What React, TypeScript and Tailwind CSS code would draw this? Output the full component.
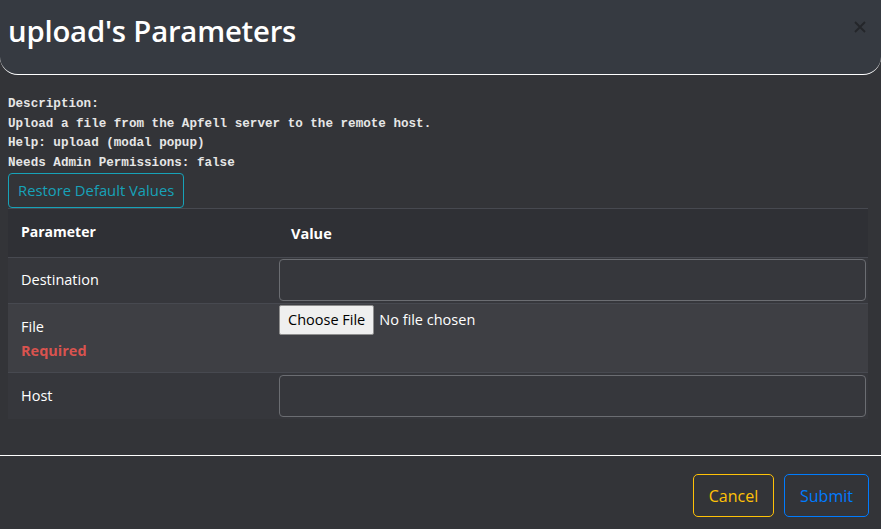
import React from "react";

export default function App() {
  const sans = { fontFamily: '"Open Sans", "Noto Sans", sans-serif' };
  return (
    <div className="w-[881px] h-[529px] bg-[#333438] flex flex-col overflow-hidden" style={sans}>
      <div className="h-[75px] shrink-0 bg-[#363a41] border-b border-white rounded-b-[18px] flex items-start justify-between pl-2 pr-[14px]">
        <h1 className="mt-[11px] text-[29.3px] font-semibold text-white leading-[40px] tracking-[-0.2px]">upload's Parameters</h1>
        <svg width="14" height="14" viewBox="0 0 14 14" className="mt-[20px]">
          <path d="M2 2 L12 12 M12 2 L2 12" stroke="#24262a" strokeWidth="1.8" />
        </svg>
      </div>
      <div className="pl-2 pr-[13px] pt-[20px]">
        <div className="text-[12.6px] font-bold leading-[19.7px] text-[#e6e6e6]" style={{ fontFamily: '"Liberation Mono", monospace' }}>
          <div>Description:</div>
          <div>Upload a file from the Apfell server to the remote host.</div>
          <div>Help: upload (modal popup)</div>
          <div>Needs Admin Permissions: false</div>
        </div>
        <button className="-mt-[1px] h-[35px] px-[9px] border border-[#17a2b8] rounded-[4px] text-[#17a2b8] text-[14.8px] leading-none block">
          Restore Default Values
        </button>
        <div className="bg-[#36373c] border-t border-[#474950]">
          <div className="h-[49px] bg-[#2f3035] flex items-center border-b border-[#474950]">
            <div className="w-[271px] pl-[13px] text-[14px] font-bold text-white -mt-[2px]">Parameter</div>
            <div className="pl-[12px] text-[14.5px] font-bold text-white mt-[3px]">Value</div>
          </div>
          <div className="h-[46px] flex items-center border-b border-[#474950]">
            <div className="w-[271px] pl-[13px] text-[14.5px] text-white">Destination</div>
            <div className="flex-1 pr-[2px]">
              <div className="h-[42px] border border-[#6b6d72] rounded-[4px] bg-[#36373c]" />
            </div>
          </div>
          <div className="h-[69px] flex items-start bg-[#3e3f44] border-b border-[#474950]">
            <div className="w-[271px] pl-[13px] pt-[13px] text-[14.5px] text-white leading-[20px]">
              <div>File</div>
              <div className="mt-[4px] font-bold text-[#d9534f]">Required</div>
            </div>
            <div className="flex items-center pt-[1px]">
              <div className="h-[30px] px-[8px] bg-[#efefef] border border-[#8f8f8f] rounded-[2px] text-[14.5px] text-black flex items-center">Choose File</div>
              <span className="ml-[5px] text-[14.5px] text-white">No file chosen</span>
            </div>
          </div>
          <div className="h-[46px] flex items-center">
            <div className="w-[271px] pl-[13px] text-[14.5px] text-white">Host</div>
            <div className="flex-1 pr-[2px]">
              <div className="h-[42px] border border-[#6b6d72] rounded-[4px] bg-[#36373c]" />
            </div>
          </div>
        </div>
      </div>
      <div className="mt-auto h-[74px] border-t border-white flex items-start justify-end gap-[10px] pr-[12px] pt-[18px]">
        <button className="h-[43px] w-[81px] border border-[#ffc107] rounded-[5px] text-[#ffc107] text-[16px]">Cancel</button>
        <button className="h-[43px] w-[85px] border border-[#007bff] rounded-[5px] text-[#007bff] text-[16px]">Submit</button>
      </div>
    </div>
  );
}
